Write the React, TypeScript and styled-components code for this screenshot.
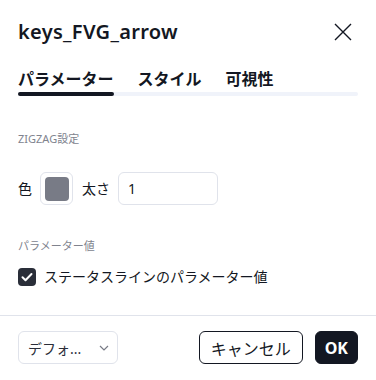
import { createGlobalStyle } from 'styled-components';
import styled from 'styled-components';

const GlobalStyle = createGlobalStyle`
  html, body {
    margin: 0;
    padding: 0;
    background: #fff;
  }
  body {
    font-family: "Noto Sans", "Noto Sans CJK JP", sans-serif;
    color: #131722;
  }
`;

const Dialog = styled.div`
  width: 376px;
  height: 380px;
  background: #fff;
  display: flex;
  flex-direction: column;
  box-sizing: border-box;
`;

const Header = styled.div`
  display: flex;
  justify-content: space-between;
  align-items: center;
  padding: 20px 23px 0 18px;
`;

const Title = styled.h2`
  margin: 0;
  font-size: 20px;
  line-height: 24px;
  font-weight: 600;
  letter-spacing: 0.3px;
  color: #131722;
`;

const CloseButton = styled.button`
  display: flex;
  align-items: center;
  justify-content: center;
  width: 20px;
  height: 20px;
  padding: 0;
  border: none;
  background: none;
  color: #131722;
  cursor: pointer;
`;

const Tabs = styled.div`
  padding: 0 18px;
  margin-top: 24px;
`;

const TabRow = styled.div`
  display: flex;
  gap: 24px;
`;

const Tab = styled.button<{ $active?: boolean }>`
  padding: 0;
  border: none;
  background: none;
  font-family: inherit;
  font-size: 16px;
  line-height: 22px;
  font-weight: 700;
  color: #131722;
  cursor: pointer;
`;

const Track = styled.div`
  margin-top: 2px;
  height: 4px;
  border-radius: 2px;
  background: #f0f3fa;
`;

const Indicator = styled.div<{ $width: number }>`
  width: ${(p) => p.$width}px;
  height: 4px;
  border-radius: 2px;
  background: #131722;
`;

const Body = styled.div`
  padding: 0 18px;
  flex: 1;
  display: flex;
  flex-direction: column;
`;

const SectionLabel = styled.div<{ $top: number }>`
  margin-top: ${(p) => p.$top}px;
  font-size: 11px;
  line-height: 16px;
  color: #80838e;
`;

const FieldRow = styled.div`
  margin-top: 25px;
  display: flex;
  align-items: center;
  height: 33px;
`;

const FieldLabel = styled.span`
  font-size: 14px;
  line-height: 20px;
  color: #131722;
  margin-right: 8px;
`;

const SwatchButton = styled.button`
  width: 33px;
  height: 33px;
  box-sizing: border-box;
  border: 1px solid #e0e3eb;
  border-radius: 6px;
  background: #fff;
  padding: 0;
  display: flex;
  align-items: center;
  justify-content: center;
  margin-right: 9px;
`;

const Swatch = styled.span<{ $color: string }>`
  width: 24px;
  height: 24px;
  border-radius: 4px;
  background: ${(p) => p.$color};
`;

const NumberInput = styled.input`
  width: 100px;
  height: 33px;
  box-sizing: border-box;
  border: 1px solid #e0e3eb;
  border-radius: 6px;
  padding: 0 9px;
  font-family: inherit;
  font-size: 14px;
  color: #131722;
  outline: none;
`;

const CheckRow = styled.label`
  margin-top: 14px;
  display: flex;
  align-items: center;
  gap: 8px;
  font-size: 14px;
  line-height: 18px;
  color: #131722;
`;

const CheckBox = styled.span`
  width: 18px;
  height: 18px;
  border-radius: 4px;
  background: #2a2e39;
  display: flex;
  align-items: center;
  justify-content: center;
`;

const Divider = styled.div`
  height: 1px;
  background: #e0e3eb;
`;

const Footer = styled.div`
  display: flex;
  align-items: center;
  padding: 15px 18px 16px;
  gap: 12px;
`;

const Select = styled.button`
  width: 100px;
  height: 33px;
  box-sizing: border-box;
  border: 1px solid #e0e3eb;
  border-radius: 6px;
  background: #fff;
  padding: 0 8px 0 9px;
  display: flex;
  align-items: center;
  justify-content: space-between;
  font-family: inherit;
  font-size: 14px;
  color: #2a2e39;
  margin-right: auto;
`;

const Button = styled.button<{ $primary?: boolean }>`
  height: 33px;
  box-sizing: border-box;
  padding: 0 ${(p) => (p.$primary ? 9 : 11)}px;
  border-radius: 6px;
  border: 1px solid #131722;
  background: ${(p) => (p.$primary ? '#131722' : '#fff')};
  color: ${(p) => (p.$primary ? '#fff' : '#131722')};
  font-family: inherit;
  font-size: 16px;
  font-weight: ${(p) => (p.$primary ? 700 : 400)};
  cursor: pointer;
`;

export default function App() {
  return (
    <>
      <GlobalStyle />
      <Dialog>
        <Header>
          <Title>keys_FVG_arrow</Title>
          <CloseButton aria-label="close">
            <svg width="18" height="18" viewBox="0 0 18 18" fill="none">
              <path d="M1 1l16 16M17 1L1 17" stroke="currentColor" strokeWidth="1.4" />
            </svg>
          </CloseButton>
        </Header>
        <Tabs>
          <TabRow>
            <Tab $active>パラメーター</Tab>
            <Tab>スタイル</Tab>
            <Tab>可視性</Tab>
          </TabRow>
          <Track>
            <Indicator $width={96} />
          </Track>
        </Tabs>
        <Body>
          <SectionLabel $top={35}>ZIGZAG設定</SectionLabel>
          <FieldRow>
            <FieldLabel>色</FieldLabel>
            <SwatchButton>
              <Swatch $color="#787b86" />
            </SwatchButton>
            <FieldLabel>太さ</FieldLabel>
            <NumberInput defaultValue="1" />
          </FieldRow>
          <SectionLabel $top={33}>パラメーター値</SectionLabel>
          <CheckRow>
            <CheckBox>
              <svg width="12" height="10" viewBox="0 0 12 10" fill="none">
                <path d="M1.5 5.2l3 3L10.5 2" stroke="#fff" strokeWidth="2" strokeLinecap="round" strokeLinejoin="round" />
              </svg>
            </CheckBox>
            ステータスラインのパラメーター値
          </CheckRow>
        </Body>
        <Divider />
        <Footer>
          <Select>
            <span>デフォ...</span>
            <svg width="10" height="6" viewBox="0 0 10 6" fill="none">
              <path d="M1 1l4 4 4-4" stroke="#787b86" strokeWidth="1.2" />
            </svg>
          </Select>
          <Button>キャンセル</Button>
          <Button $primary>OK</Button>
        </Footer>
      </Dialog>
    </>
  );
}
